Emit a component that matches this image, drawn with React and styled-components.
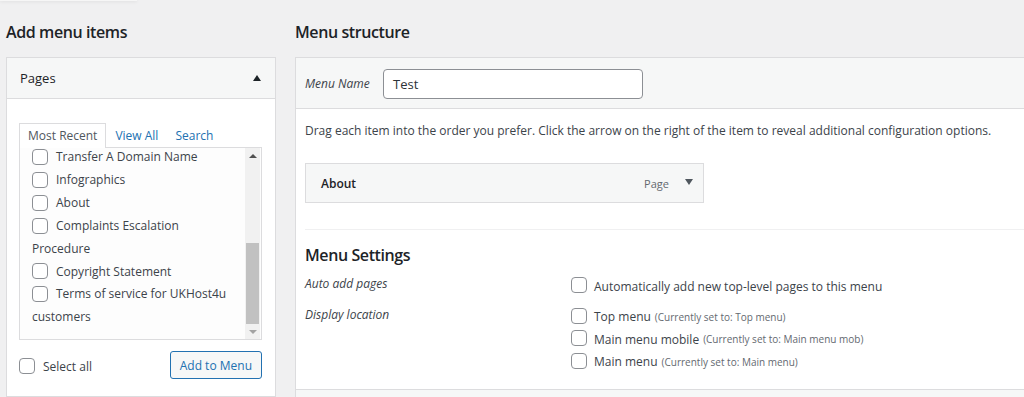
import React from "react";
import styled, { createGlobalStyle } from "styled-components";

const GlobalStyle = createGlobalStyle`
  html, body { margin: 0; padding: 0; }
  body {
    background: #f0f0f1;
    font-family: "Open Sans", "Noto Sans", Arial, sans-serif;
    font-size: 12px;
    color: #3c434a;
    overflow: hidden;
  }
  * { box-sizing: border-box; }
`;

const TopShadow = styled.div`
  width: 137px;
  height: 1px;
  background: #f6f6f6;
  box-shadow: 0 1px 3px rgba(0, 0, 0, 0.12);
`;

const Page = styled.div`
  display: flex;
  gap: 19px;
  padding-left: 6px;
  width: 1024px;
  height: 396px;
  overflow: hidden;
`;

const Column = styled.div`
  flex: 0 0 ${(p) => p.$width}px;
  display: flex;
  flex-direction: column;
`;

const Heading = styled.h2`
  margin: 20px 0 14px;
  font-size: 16px;
  line-height: 22px;
  font-weight: 600;
  color: #1d2327;
  letter-spacing: -0.4px;
`;

const Panel = styled.div`
  background: #fff;
  border: 1px solid #dcdcde;
  display: flex;
  flex-direction: column;
  flex: 1;
`;

const AccordionHead = styled.div`
  height: 41px;
  background: #f6f7f7;
  border-bottom: 1px solid #dcdcde;
  display: flex;
  align-items: center;
  justify-content: space-between;
  padding: 0 14px 0 13px;
  font-size: 13px;
  color: #1d2327;
`;

const UpArrow = styled.span`
  width: 0;
  height: 0;
  border-left: 4px solid transparent;
  border-right: 4px solid transparent;
  border-bottom: 6px solid #1d2327;
`;

const AccordionBody = styled.div`
  padding: 23px 13px 0 12px;
`;

const Tabs = styled.div`
  display: flex;
  align-items: flex-end;
  height: 25px;
`;

const Tab = styled.span`
  padding: 0 ${(p) => (p.$active ? 8 : 7)}px;
  height: 25px;
  line-height: 24px;
  font-size: 12px;
  color: ${(p) => (p.$active ? "#50575e" : "#2271b1")};
  background: ${(p) => (p.$active ? "#fff" : "transparent")};
  border: ${(p) => (p.$active ? "1px solid #dcdcde" : "1px solid transparent")};
  border-bottom: none;
  margin-right: ${(p) => (p.$active ? "1px" : "1px")};
  position: relative;
  z-index: 1;
  margin-bottom: -1px;
`;

const ListBox = styled.div`
  height: 193px;
  border: 1px solid #dcdcde;
  background: #fdfdfd;
  display: flex;
  overflow: hidden;
`;

const ListScroll = styled.ul`
  flex: 1;
  list-style: none;
  margin: -2px 0 0;
  padding: 0 0 0 12px;
`;

const ListItem = styled.li`
  font-size: 12px;
  line-height: 22.9px;
  color: #3c434a;
`;

const Check = styled.span`
  display: inline-block;
  vertical-align: middle;
  width: ${(p) => p.$size || 16}px;
  height: ${(p) => p.$size || 16}px;
  border: 1px solid #8c8f94;
  border-radius: 4px;
  background: #fff;
  margin-right: ${(p) => p.$gap || 8}px;
  margin-top: -2px;
  flex-shrink: 0;
`;

const ScrollTrack = styled.div`
  width: 15px;
  margin-right: 1px;
  background: #f1f1f1;
  display: flex;
  flex-direction: column;
  align-items: center;
`;

const ScrollArrow = styled.span`
  flex: 0 0 15px;
  width: 15px;
  display: flex;
  align-items: center;
  justify-content: center;
  &::after {
    content: "";
    border-left: 4px solid transparent;
    border-right: 4px solid transparent;
    ${(p) =>
      p.$down
        ? "border-top: 4px solid #a3a3a3;"
        : "border-bottom: 4px solid #505050;"}
  }
`;

const ScrollSpace = styled.div`
  flex: 1;
  width: 100%;
  display: flex;
  flex-direction: column;
  justify-content: flex-end;
`;

const Thumb = styled.div`
  height: 81px;
  margin: 0 1px;
  background: #c1c1c1;
`;

const FooterRow = styled.div`
  display: flex;
  align-items: center;
  justify-content: space-between;
  margin-top: 11px;
`;

const SelectAll = styled.label`
  display: flex;
  align-items: center;
  font-size: 12px;
  color: #3c434a;
  margin-top: 3px;
`;

const Button = styled.button`
  height: 28px;
  padding: 0 9px;
  border: 1px solid #2271b1;
  border-radius: 3px;
  background: #f6f7f7;
  color: #2271b1;
  font-family: inherit;
  font-size: 12px;
`;

const StructHead = styled.div`
  height: 51px;
  background: #f6f7f7;
  border-bottom: 1px solid #dcdcde;
  display: flex;
  align-items: center;
  padding: 0 10px 0 9px;
`;

const FieldLabel = styled.span`
  font-style: italic;
  font-size: 12px;
  color: #3c434a;
  width: ${(p) => p.$width}px;
  flex-shrink: 0;
`;

const NameInput = styled.div`
  width: 260px;
  height: 30px;
  border: 1px solid #8c8f94;
  border-radius: 4px;
  background: #fff;
  padding: 0 9px;
  display: flex;
  align-items: center;
  font-size: 13px;
  color: #2c3338;
  margin-top: 1px;
`;

const StructBody = styled.div`
  padding: 12px 0 0 9px;
  flex: 1;
`;

const Para = styled.p`
  margin: 0;
  font-size: 12px;
  line-height: 20px;
  color: #3c434a;
`;

const MenuItem = styled.div`
  margin-top: 22px;
  width: 399px;
  height: 40px;
  border: 1px solid #dcdcde;
  background: #f6f7f7;
  display: flex;
  align-items: center;
  padding: 0 10px 0 15px;
`;

const ItemTitle = styled.span`
  flex: 1;
  font-weight: 600;
  font-size: 12px;
  color: #1d2327;
`;

const ItemType = styled.span`
  font-size: 11px;
  color: #646970;
  margin-right: 16px;
`;

const DownArrow = styled.span`
  border-left: 4px solid transparent;
  border-right: 4px solid transparent;
  border-top: 6px solid #50575e;
  margin-top: -2px;
`;

const Divider = styled.hr`
  border: 0;
  border-top: 1px solid #f0f0f1;
  margin: 26px 0 0;
`;

const SubHeading = styled.h3`
  margin: 13px 0 0;
  font-size: 16px;
  line-height: 24px;
  font-weight: 600;
  color: #1d2327;
  letter-spacing: -0.4px;
`;

const SettingRow = styled.div`
  display: flex;
  align-items: flex-start;
  margin-top: ${(p) => p.$mt}px;
`;

const Options = styled.div`
  display: flex;
  flex-direction: column;
`;

const Option = styled.label`
  display: flex;
  align-items: center;
  height: 22.5px;
  font-size: 12px;
  color: #3c434a;
`;

const Note = styled.span`
  font-size: 10px;
  color: #646970;
  margin-left: 4px;
`;

const PanelFoot = styled.div`
  height: 30px;
  background: #f6f7f7;
  border-top: 1px solid #dcdcde;
  margin-top: 16px;
`;

const pages = [
  ["Transfer A Domain Name"],
  ["Infographics"],
  ["About"],
  ["Complaints Escalation", "Procedure"],
  ["Copyright Statement"],
  ["Terms of service for UKHost4u", "customers"],
];

const locations = [
  ["Top menu", "(Currently set to: Top menu)"],
  ["Main menu mobile", "(Currently set to: Main menu mob)"],
  ["Main menu", "(Currently set to: Main menu)"],
];

export default function App() {
  return (
    <>
      <GlobalStyle />
      <TopShadow />
      <Page>
        <Column $width={270}>
          <Heading>Add menu items</Heading>
          <Panel>
            <AccordionHead>
              <span>Pages</span>
              <UpArrow />
            </AccordionHead>
            <AccordionBody>
              <Tabs>
                <Tab $active>Most Recent</Tab>
                <Tab>View All</Tab>
                <Tab>Search</Tab>
              </Tabs>
              <ListBox>
                <ListScroll>
                  {pages.map(([a, b]) => (
                    <ListItem key={a}>
                      <Check />
                      {a}
                      {b && (
                        <>
                          <br />
                          {b}
                        </>
                      )}
                    </ListItem>
                  ))}
                </ListScroll>
                <ScrollTrack>
                  <ScrollArrow />
                  <ScrollSpace>
                    <Thumb />
                  </ScrollSpace>
                  <ScrollArrow $down />
                </ScrollTrack>
              </ListBox>
              <FooterRow>
                <SelectAll>
                  <Check $gap={8} />
                  Select all
                </SelectAll>
                <Button>Add to Menu</Button>
              </FooterRow>
            </AccordionBody>
          </Panel>
        </Column>
        <Column $width={760}>
          <Heading>Menu structure</Heading>
          <Panel>
            <StructHead>
              <FieldLabel $width={78}>Menu Name</FieldLabel>
              <NameInput>Test</NameInput>
            </StructHead>
            <StructBody>
              <Para>
                Drag each item into the order you prefer. Click the arrow on the
                right of the item to reveal additional configuration options.
              </Para>
              <MenuItem>
                <ItemTitle>About</ItemTitle>
                <ItemType>Page</ItemType>
                <DownArrow />
              </MenuItem>
              <Divider />
              <SubHeading>Menu Settings</SubHeading>
              <SettingRow $mt={8}>
                <FieldLabel $width={266}>Auto add pages</FieldLabel>
                <Options>
                  <Option>
                    <Check $gap={7} />
                    Automatically add new top-level pages to this menu
                  </Option>
                </Options>
              </SettingRow>
              <SettingRow $mt={8}>
                <FieldLabel $width={266}>Display location</FieldLabel>
                <Options>
                  {locations.map(([l, n]) => (
                    <Option key={l}>
                      <Check $gap={7} />
                      {l}
                      <Note>{n}</Note>
                    </Option>
                  ))}
                </Options>
              </SettingRow>
            </StructBody>
            <PanelFoot />
          </Panel>
        </Column>
      </Page>
    </>
  );
}
